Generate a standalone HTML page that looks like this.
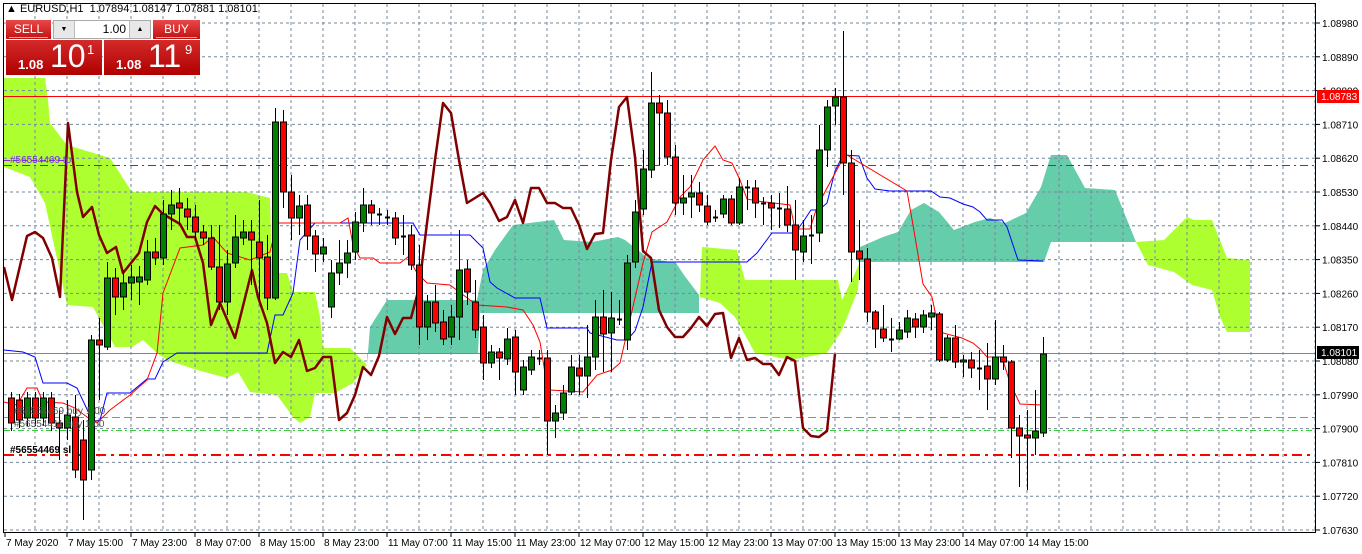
<!DOCTYPE html>
<html><head><meta charset="utf-8">
<style>
html,body{margin:0;padding:0;background:#fff;width:1362px;height:554px;overflow:hidden;font-family:"Liberation Sans",sans-serif}
#wrap{position:relative;width:1362px;height:554px}
svg{position:absolute;left:0;top:0}
.t{font-family:"Liberation Sans",sans-serif;font-size:10px;fill:#000}
#panel{position:absolute;left:6px;top:20px;width:194px;height:56px}
.btn{position:absolute;background:linear-gradient(#e84848,#c41010);color:#fff;font-size:12px;text-align:center}
.big{position:absolute;top:20px;height:35px;width:96px;background:linear-gradient(#d42a2a,#b00000);color:#fff}
.big .s{position:absolute;left:12px;top:17px;font-size:13px;font-weight:bold}
.big .b{position:absolute;left:44px;top:-2px;font-size:32px}
.big .u{position:absolute;left:81px;top:2px;font-size:13px}
</style></head><body>
<div id="wrap">
<svg id="c" width="1362" height="554" xmlns="http://www.w3.org/2000/svg"></svg>
<div style="position:absolute;left:6px;top:3px;font-size:11px;color:#000;white-space:pre">▲ EURUSD,H1  1.07894 1.08147 1.07881 1.08101</div>
<div id="panel">
 <div class="btn" style="left:0;top:0;width:45px;height:19px;line-height:19px">SELL<div style="position:absolute;left:3px;right:3px;bottom:1px;height:1px;background:#f2a0a0"></div></div>
 <div style="position:absolute;left:47px;top:0;width:98px;height:19px;background:#fff;border:1px solid #aaa;box-sizing:border-box">
  <div style="position:absolute;left:0;top:0;width:20px;height:17px;background:#e8e8e8;border-right:1px solid #bbb;font-size:7px;text-align:center;line-height:17px">▼</div>
  <div style="position:absolute;right:24px;top:1px;font-size:12px">1.00</div>
  <div style="position:absolute;right:0;top:0;width:20px;height:17px;background:#e8e8e8;border-left:1px solid #bbb;font-size:7px;text-align:center;line-height:17px">▲</div>
 </div>
 <div class="btn" style="left:147px;top:0;width:47px;height:19px;line-height:19px">BUY<div style="position:absolute;left:3px;right:3px;bottom:1px;height:1px;background:#f2a0a0"></div></div>
 <div class="big" style="left:0"><span class="s">1.08</span><span class="b">10</span><span class="u">1</span></div>
 <div class="big" style="left:98px"><span class="s">1.08</span><span class="b">11</span><span class="u">9</span></div>
</div>
</div>
<script>
var NS="http://www.w3.org/2000/svg",svg=document.getElementById('c');
function el(n,a,p){var e=document.createElementNS(NS,n);for(var k in a)e.setAttribute(k,a[k]);(p||svg).appendChild(e);return e}
function pts(a){return a.map(function(p){return p[0]+','+p[1]}).join(' ')}
// clouds
var lime='#ADFF2F',teal='#66CDAA';
el('polygon',{points:pts([[4,78],[45,78],[48,100],[50,123],[67,145],[77,148],[110,158],[132,192],[247,192],[270,198],[272,273],[287,273],[293,292],[315,292],[320,317],[323,348],[350,348],[367,365],[353,383],[335,393],[315,393],[310,417],[300,423],[293,417],[277,395],[250,392],[238,372],[227,378],[197,370],[167,360],[157,353],[143,340],[132,347],[115,347],[93,307],[67,305],[45,203],[30,177],[4,167]]),fill:lime});
el('polygon',{points:pts([[367,365],[370,327],[387,300],[477,300],[483,270],[495,250],[513,225],[554,220],[564,240],[592,242],[618,237],[625,240],[648,258],[676,263],[684,275],[699,295],[699,313],[480,313],[478,353],[367,353]]),fill:teal});
el('polygon',{points:pts([[700,297],[702,247],[737,250],[745,280],[838,280],[842,300],[855,273],[860,262],[858,290],[842,330],[827,353],[791,360],[755,353],[735,317],[720,303]]),fill:lime});
el('polygon',{points:pts([[858,262],[860,247],[883,237],[898,232],[911,210],[924,203],[939,212],[954,230],[975,222],[990,218],[1005,223],[1026,213],[1041,187],[1051,155],[1067,155],[1085,188],[1115,190],[1136,242],[1051,242],[1044,262]]),fill:teal});
el('polygon',{points:pts([[1136,242],[1164,240],[1187,217],[1194,220],[1212,220],[1227,258],[1250,260],[1250,332],[1227,332],[1220,317],[1212,290],[1192,285],[1174,272],[1148,265]]),fill:lime});
// grid
var gy=[];for(var i=0;i<16;i++)gy.push(23+33.8*i);
gy.forEach(function(y){el('line',{x1:4,x2:1316,y1:y,y2:y,stroke:'#778899','stroke-dasharray':'3,3','stroke-width':1})});
for(var x=35;x<1316;x+=32)el('line',{x1:x,x2:x,y1:4,y2:533,stroke:'#778899','stroke-dasharray':'3,3','stroke-width':1});
// horizontal levels
el('line',{x1:4,x2:1316,y1:165.5,y2:165.5,stroke:'#f00','stroke-dasharray':'8,4,2,4'});
el('line',{x1:4,x2:65,y1:160.5,y2:160.5,stroke:'#8a2be2','stroke-dasharray':'6,3'});
el('line',{x1:4,x2:1316,y1:417.5,y2:417.5,stroke:'#32cd32','stroke-dasharray':'8,4'});
el('line',{x1:4,x2:1316,y1:430.5,y2:430.5,stroke:'#32cd32','stroke-dasharray':'6,3,2,3'});
el('line',{x1:4,x2:1316,y1:455,y2:455,stroke:'#f00','stroke-width':2,'stroke-dasharray':'10,5,3,5'});
el('line',{x1:4,x2:1316,y1:353.5,y2:353.5,stroke:'#778899'});
el('line',{x1:4,x2:1316,y1:96.5,y2:96.5,stroke:'#f00'});
// lines
var kij=[[4,350],[23,352],[35,357],[43,383],[67,383],[77,388],[93,422],[100,420],[107,393],[130,393],[147,379],[155,379],[163,362],[177,353],[267,353],[275,315],[283,315],[293,293],[300,240],[315,223],[413,223],[420,235],[470,235],[483,248],[490,282],[497,288],[515,298],[540,298],[547,328],[587,328],[590,333],[617,340],[627,340],[635,331],[643,307],[652,262],[747,262],[757,253],[772,233],[795,233],[803,222],[811,210],[819,210],[827,203],[835,171],[843,155],[859,156],[867,178],[875,189],[890,191],[931,191],[940,197],[950,198],[963,204],[973,207],[980,212],[987,220],[1002,220],[1007,227],[1018,260],[1043,261]];
var ten=[[4,402],[17,405],[27,388],[37,388],[43,402],[63,403],[75,408],[87,417],[97,423],[110,410],[130,395],[147,380],[157,353],[163,293],[180,248],[203,245],[213,237],[227,253],[250,260],[270,252],[277,223],[340,223],[348,218],[353,245],[360,258],[373,258],[380,263],[400,263],[408,257],[417,273],[427,283],[450,285],[470,300],[477,305],[507,307],[523,310],[533,325],[540,342],[545,373],[550,390],[583,392],[597,375],[612,370],[620,363],[643,263],[652,232],[667,222],[680,197],[690,187],[703,160],[715,146],[723,160],[732,163],[740,180],[747,199],[757,201],[790,205],[795,229],[810,229],[817,207],[827,188],[840,164],[847,155],[907,191],[913,225],[923,284],[932,297],[937,321],[943,333],[962,338],[973,343],[980,349],[987,357],[1002,357],[1010,383],[1020,404],[1042,405]];
var chi=[[4,267],[12,300],[27,236],[35,232],[43,238],[52,258],[60,297],[68,123],[77,192],[83,217],[92,207],[99,235],[107,253],[116,247],[123,273],[139,253],[147,222],[155,206],[163,214],[180,224],[187,237],[195,237],[203,263],[211,325],[220,303],[235,338],[252,270],[258,297],[267,323],[275,363],[283,352],[291,357],[299,340],[307,371],[315,368],[323,357],[331,357],[339,420],[347,413],[355,395],[363,367],[371,375],[379,356],[387,317],[395,334],[403,318],[411,318],[419,288],[427,223],[435,160],[443,103],[451,113],[459,160],[467,203],[483,193],[490,203],[499,221],[507,217],[515,200],[523,223],[531,188],[539,188],[547,203],[555,203],[563,208],[571,208],[579,225],[587,249],[595,234],[603,233],[611,160],[619,107],[627,97],[635,157],[643,251],[651,258],[659,310],[667,327],[675,337],[683,337],[691,328],[699,317],[707,326],[715,314],[723,313],[731,358],[739,338],[747,360],[755,358],[763,364],[771,364],[779,375],[787,357],[795,361],[803,428],[811,436],[819,437],[827,431],[835,354]];
el('polyline',{points:pts(kij),fill:'none',stroke:'#00f','stroke-width':1});
el('polyline',{points:pts(ten),fill:'none',stroke:'#f00','stroke-width':1});
el('polyline',{points:pts(chi),fill:'none',stroke:'#800000','stroke-width':2.5,'stroke-linejoin':'round'});
// candles [o,c,(h,l)]
var C=[[398,423],[400,420],[418,398],[398,418],[418,398],[398,423],[423,428,410,460],[428,415,400,440],[417,470,395,478],[440,480,420,520],[470,340,335,480],[340,345,318,400],[347,278,262,350],[278,297,268,315],[297,283,270,310],[283,277,265,300],[282,277,266,305],[280,252,240,285],[252,258,238,265],[258,214,200,265],[214,205,190,230],[203,208,188,225],[209,217,198,230],[217,232,205,240],[232,238,225,245],[238,267,225,270],[267,302,225,310],[302,264,250,315],[263,237,215,268],[238,232,220,245],[232,240,220,285],[242,258,200,300],[257,298,235,310],[298,122,108,300],[122,192,110,208],[192,218,175,240],[218,206,195,235],[205,236,195,250],[236,254,230,272],[254,247,238,262],[307,273,260,318],[273,263,240,285],[263,253,240,278],[252,222,212,260],[223,205,188,232],[205,213,200,225],[214,214,208,225],[217,217,210,225],[218,238,212,245],[236,236,215,255],[235,265,225,270],[265,327,245,345],[327,302,295,340],[302,323,285,332],[322,339,310,345],[337,317,305,345],[317,270,230,340],[269,292,260,305],[302,330,280,338],[327,363,315,380],[363,352,345,368],[352,358,348,380],[359,339,328,365],[337,372,330,395],[390,367,360,395],[370,357,350,375],[358,358,350,365],[358,421,350,455],[421,413,405,438],[413,393,385,420],[392,367,355,395],[368,376,355,395],[376,357,325,398],[357,317,300,370],[317,334,290,372],[333,318,292,372],[319,319,300,325],[340,263,255,350],[262,212,200,268],[209,169,150,215],[170,103,72,178],[103,113,95,165],[113,157,100,165],[157,203,145,215],[203,198,175,215],[197,193,175,218],[193,205,182,212],[206,222,195,225],[217,217,210,222],[214,199,195,218],[199,223,195,225],[223,187,178,225],[187,188,180,210],[188,203,180,218],[203,203,197,225],[203,208,195,230],[208,208,193,228],[209,225,186,232],[225,250,200,280],[252,236,220,262],[235,235,215,264],[233,150,125,242],[150,107,100,167],[106,97,88,125],[97,163,31,195],[163,252,150,282],[251,259,220,280],[259,312,248,322],[312,329,310,348],[329,338,305,342],[339,339,318,352],[339,330,322,340],[332,318,310,338],[319,327,313,338],[327,315,310,333],[317,313,305,330],[314,360,312,362],[360,338,335,362],[338,362,325,368],[362,360,355,377],[360,368,352,378],[368,368,350,390],[366,379,343,410],[379,357,320,385],[357,362,345,370],[362,428,360,458],[428,436,415,487],[435,438,410,490],[438,431,390,455],[433,354,337,437]];
for(var i=0;i<C.length;i++){var c=C[i],x=11+8*i,o=c[0],cl=c[1];var h=c.length>2?c[2]:Math.min(o,cl)-6,l=c.length>2?c[3]:Math.max(o,cl)+8;
 el('line',{x1:x+0.5,x2:x+0.5,y1:h,y2:l,stroke:'#000'});
 var t=Math.min(o,cl),b=Math.max(o,cl);
 if(b-t<1.5){el('line',{x1:x-2,x2:x+3,y1:t+0.5,y2:t+0.5,stroke:'#000','stroke-width':2});}
 else el('rect',{x:x-2.5,y:t,width:6,height:b-t,fill:cl<o?'#008000':'#f00',stroke:'#000','stroke-width':1});
}
// texts
var tp=el('text',{x:10,y:163,class:'t',fill:'#8a2be2'});tp.setAttribute('style','fill:#7b2ee0');tp.textContent='#56554469 tp';
var b1=el('text',{x:14,y:414,class:'t'});b1.setAttribute('style','fill:#555');b1.textContent='#56554469 buy 1.00';
var b2=el('text',{x:14,y:427,class:'t'});b2.setAttribute('style','fill:#555');b2.textContent='#56554411 buy 1.00';
var sl=el('text',{x:10,y:453,class:'t'});sl.setAttribute('style','font-weight:bold');sl.textContent='#56554469 sl';
// frame
el('rect',{x:3.5,y:3.5,width:1312,height:529,fill:'none',stroke:'#000'});
// right axis labels
var labs=['1.08980','1.08890','1.08800','1.08710','1.08620','1.08530','1.08440','1.08350','1.08260','1.08170','1.08080','1.07990','1.07900','1.07810','1.07720','1.07630'];
labs.forEach(function(s,i){var y=gy[i];el('line',{x1:1316,x2:1320,y1:y,y2:y,stroke:'#000'});var t=el('text',{x:1322,y:y+4,class:'t'});t.textContent=s;});
el('rect',{x:1317,y:90,width:42,height:13,fill:'#f00'});var r=el('text',{x:1321,y:100,class:'t'});r.setAttribute('style','fill:#fff');r.textContent='1.08783';
el('rect',{x:1317,y:346,width:42,height:13,fill:'#000'});var r2=el('text',{x:1321,y:356,class:'t'});r2.setAttribute('style','fill:#fff');r2.textContent='1.08101';
// time labels
var tl=[[5,'7 May 2020'],[67,'7 May 15:00'],[131,'7 May 23:00'],[195,'8 May 07:00'],[259,'8 May 15:00'],[323,'8 May 23:00'],[387,'11 May 07:00'],[451,'11 May 15:00'],[515,'11 May 23:00'],[579,'12 May 07:00'],[643,'12 May 15:00'],[707,'12 May 23:00'],[771,'13 May 07:00'],[835,'13 May 15:00'],[899,'13 May 23:00'],[963,'14 May 07:00'],[1027,'14 May 15:00']];
tl.forEach(function(a){el('line',{x1:a[0],x2:a[0],y1:533,y2:537,stroke:'#000'});var t=el('text',{x:a[0]+1,y:546,class:'t'});t.textContent=a[1];});
</script>
</body></html>
